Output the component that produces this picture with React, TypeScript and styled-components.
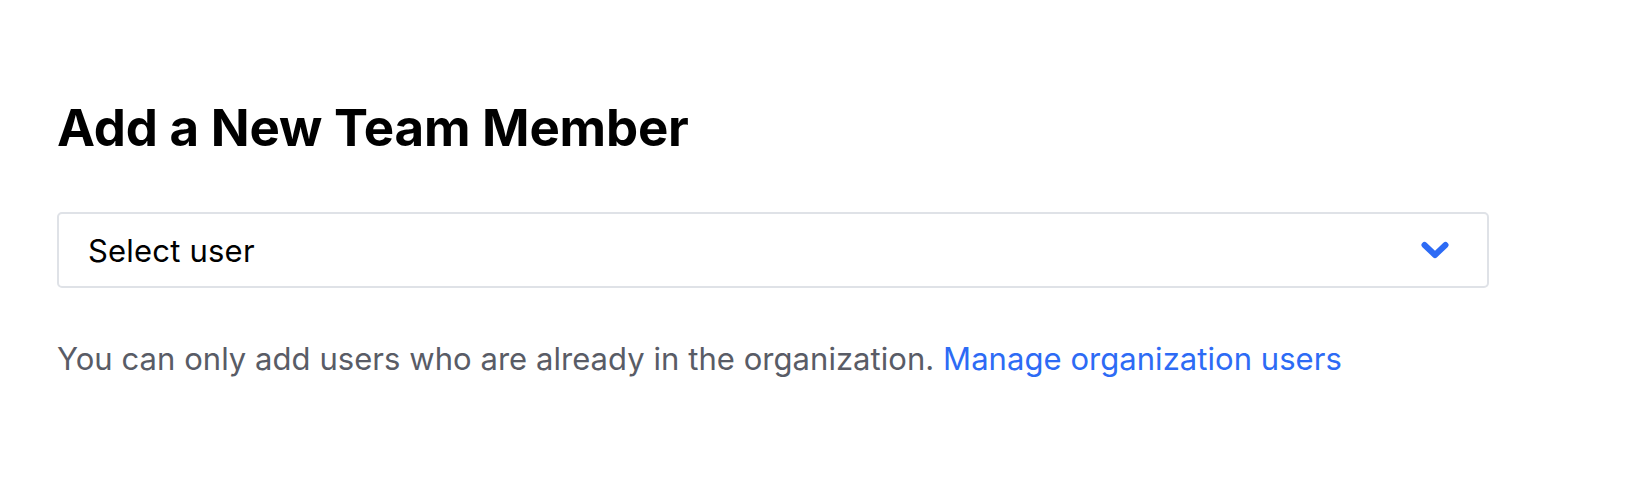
import styled, { createGlobalStyle } from 'styled-components';

const GlobalStyle = createGlobalStyle`
  html, body {
    margin: 0;
    padding: 0;
    background: #ffffff;
  }
  body {
    font-family: Inter, "Noto Sans", "Liberation Sans", sans-serif;
    color: #000000;
  }
`;

const Page = styled.div`
  padding: 97px 163px 0 57px;
  display: flex;
  flex-direction: column;
`;

const Heading = styled.h1`
  margin: 0;
  font-size: 51px;
  line-height: 61px;
  font-weight: 700;
  letter-spacing: -0.2px;
  color: #000000;
`;

const SelectBox = styled.div`
  margin-top: 54px;
  height: 76px;
  box-sizing: border-box;
  border: 2px solid #dfe2e7;
  border-radius: 5px;
  display: flex;
  align-items: center;
  justify-content: space-between;
  padding: 0 38px 0 29px;
  cursor: pointer;
`;

const SelectLabel = styled.span`
  font-size: 31px;
  letter-spacing: 0.2px;
  color: #000000;
`;

const Chevron = styled.svg`
  width: 28px;
  height: 18px;
  color: #2d6bf5;
`;

const Helper = styled.p`
  margin: 50px 0 0;
  font-size: 31px;
  line-height: 42px;
  letter-spacing: 0.05px;
  color: #595c66;
`;

const Link = styled.a`
  color: #2d6bf5;
  text-decoration: none;
`;

export default function App() {
  return (
    <>
      <GlobalStyle />
      <Page>
        <Heading>Add a New Team Member</Heading>
        <SelectBox>
          <SelectLabel>Select user</SelectLabel>
          <Chevron viewBox="0 0 28 18" fill="none">
            <path
              d="M3.5 4 L14 14 L24.5 4"
              stroke="currentColor"
              strokeWidth="6"
              strokeLinecap="round"
              strokeLinejoin="round"
            />
          </Chevron>
        </SelectBox>
        <Helper>
          You can only add users who are already in the organization.{' '}
          <Link href="#">Manage organization users</Link>
        </Helper>
      </Page>
    </>
  );
}
